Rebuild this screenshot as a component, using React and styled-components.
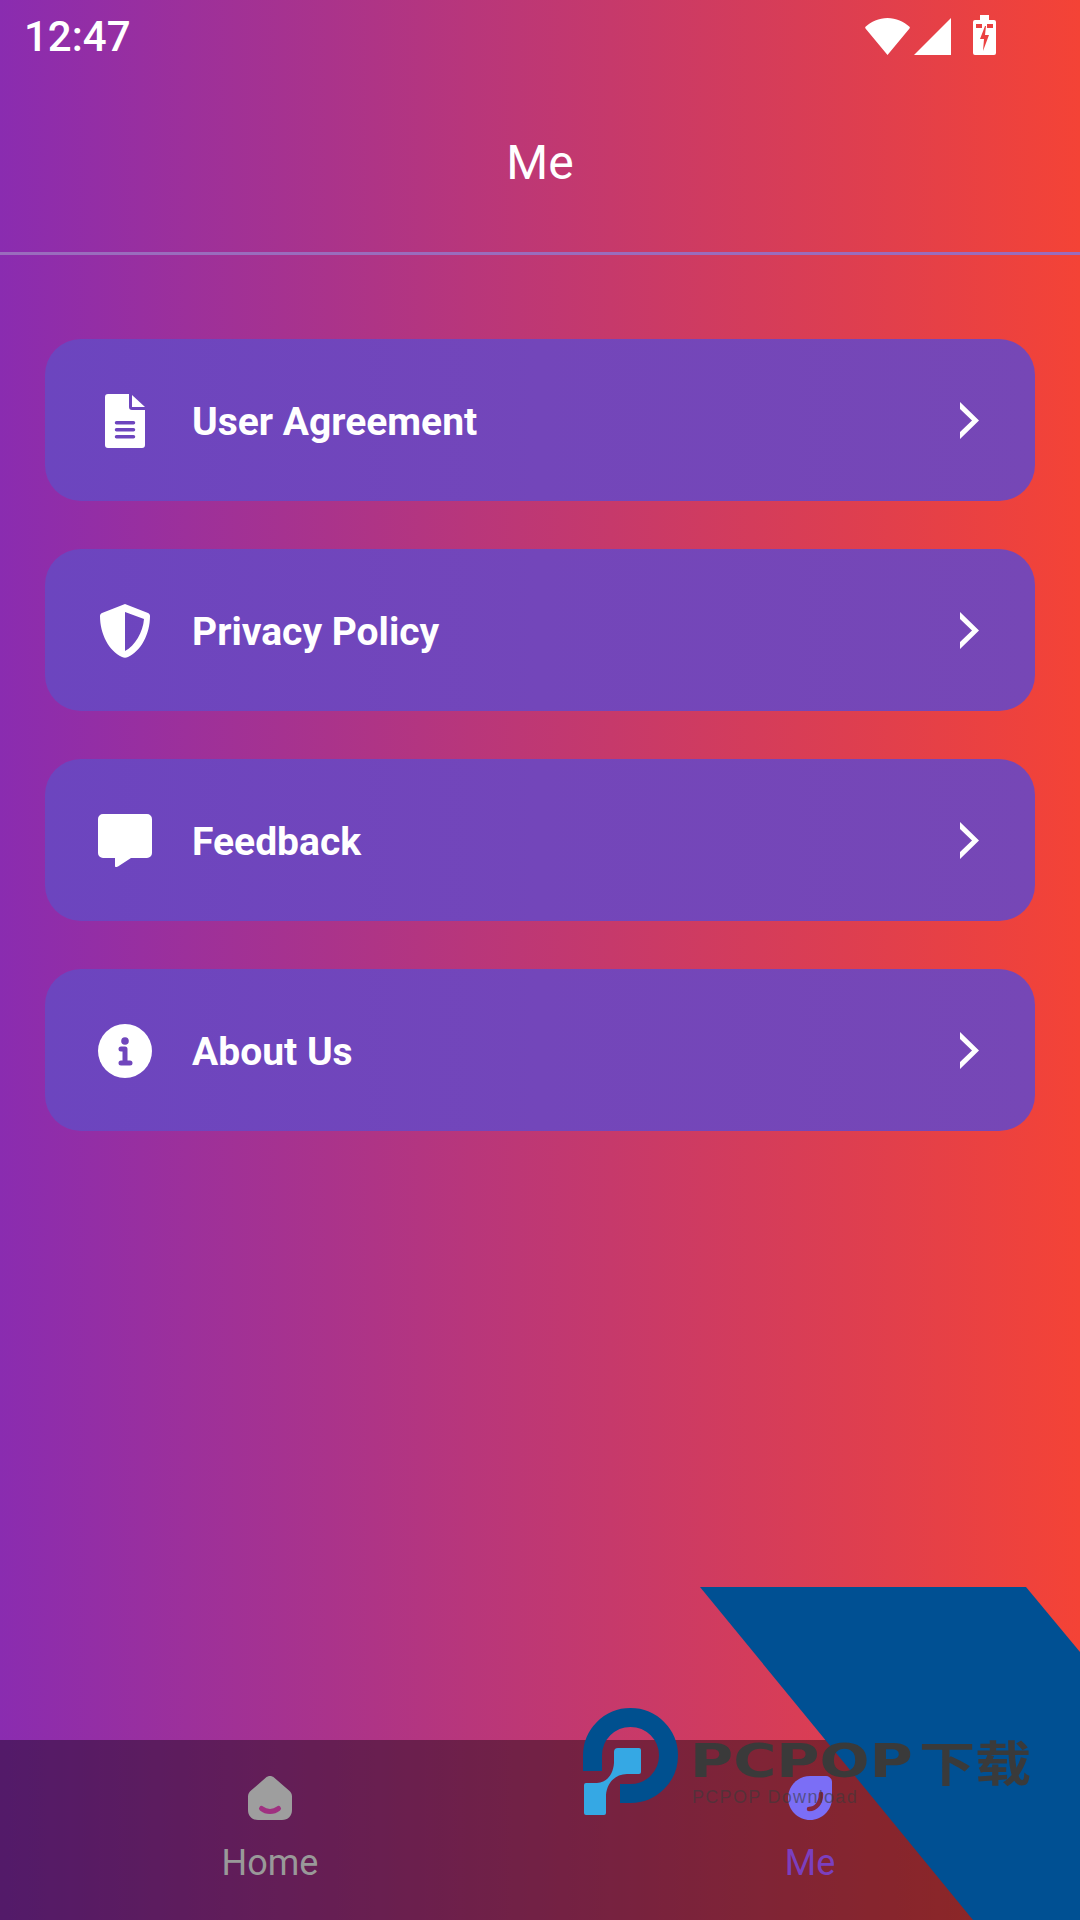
import React from "react";
import styled, { createGlobalStyle } from "styled-components";

const GlobalStyle = createGlobalStyle`
  html, body {
    margin: 0;
    padding: 0;
  }
  body {
    font-family: Roboto, "Liberation Sans", sans-serif;
  }
`;

const Page = styled.div`
  position: relative;
  width: 1080px;
  height: 1920px;
  overflow: hidden;
  display: flex;
  flex-direction: column;
  background: linear-gradient(to right, #8a2cb0, #f44336);
  color: #fff;
`;

const StatusBar = styled.div`
  height: 72px;
  padding: 0 84px 0 24px;
  display: flex;
  align-items: center;
  justify-content: space-between;
  font-size: 42px;
  font-weight: 500;
`;

const StatusIcons = styled.div`
  display: flex;
  align-items: flex-end;
  padding-bottom: 3px;
`;

const Header = styled.header`
  height: 180px;
  display: flex;
  align-items: center;
  justify-content: center;
  font-size: 48px;
  border-bottom: 3px solid #9a6cbd;
`;

const Menu = styled.div`
  padding: 84px 45px 0;
  display: flex;
  flex-direction: column;
  gap: 48px;
`;

const MenuRow = styled.div`
  height: 162px;
  padding: 0 56px 0 53px;
  border-radius: 36px;
  display: flex;
  align-items: center;
  background: linear-gradient(to right, #6c45bf, #7346ba 50%, #7647b6);
`;

const RowIcon = styled.div`
  width: 54px;
  height: 54px;
  margin: 1px 40px 0 0;
  display: flex;
  align-items: center;
  justify-content: center;
`;

const RowLabel = styled.div`
  flex: 1;
  padding-top: 3px;
  font-size: 39px;
  font-weight: 700;
`;

const TabBar = styled.nav`
  margin-top: auto;
  height: 180px;
  display: flex;
  background: rgba(0, 0, 0, 0.4);
`;

const Tab = styled.div`
  flex: 1;
  display: flex;
  flex-direction: column;
  align-items: center;
  padding-top: 36px;
  font-size: 36px;
  color: ${(p) => (p.$active ? "#7b3fbf" : "#999999")};
`;

const TabIcon = styled.div`
  height: 44px;
  margin-bottom: 22px;
`;

const Ribbon = styled.div`
  position: absolute;
  left: 700px;
  top: 1587px;
  width: 380px;
  height: 333px;
  background: #005093;
  clip-path: polygon(0 0, 326px 0, 380px 65px, 380px 333px, 273px 333px);
`;

const Watermark = styled.div`
  position: absolute;
  left: 583px;
  top: 1707px;
  width: 450px;
  height: 110px;
`;

const MarkTitle = styled.div`
  position: absolute;
  left: 107px;
  top: 27px;
  font-family: "DejaVu Sans", sans-serif;
  font-weight: 700;
  font-size: 46px;
  line-height: 54px;
  color: #3a3a3a;
  transform: scaleX(1.28);
  transform-origin: left center;
`;

const MarkCjk = styled.div`
  position: absolute;
  left: 336px;
  top: 26px;
  font-family: "Noto Sans CJK SC", sans-serif;
  font-weight: 700;
  font-size: 56px;
  line-height: 56px;
  color: #3a3a3a;
  transform: scaleY(0.85);
`;

const MarkSub = styled.div`
  position: absolute;
  left: 109px;
  top: 80px;
  font-family: "Liberation Sans", sans-serif;
  font-size: 18px;
  line-height: 20px;
  letter-spacing: 1.3px;
  color: rgba(58, 58, 58, 0.6);
  white-space: nowrap;
`;

const Chevron = () => (
  <svg width="19" height="37" viewBox="0 0 19 37">
    <path fill="#fff" d="M0 0l19 18.500L0 37v-7l12-11.500L0 7z" />
  </svg>
);

const DocIcon = () => (
  <svg width="40" height="54" viewBox="0 0 40 54">
    <path fill="#fff" fillRule="evenodd" d="M3 0h21v13a3 3 0 0 0 3 3h13v35a3 3 0 0 1-3 3H3a3 3 0 0 1-3-3V3a3 3 0 0 1 3-3zM11.500 27a1.750 1.750 0 0 0 0 3.500h17a1.750 1.750 0 0 0 0-3.500zM11.500 34a1.750 1.750 0 0 0 0 3.500h17a1.750 1.750 0 0 0 0-3.500zM11.500 41a1.750 1.750 0 0 0 0 3.500h17a1.750 1.750 0 0 0 0-3.500z" />
    <path fill="#fff" d="M27 1l13 12H27z" />
  </svg>
);

const ShieldIcon = () => (
  <svg width="50" height="54" viewBox="0 0 50 54">
    <path fill="#fff" fillRule="evenodd" d="M25 0l23 9c1.200.500 2 1.500 2 3 0 18-9 35-22 41-2 1-4 1-6 0C9 47 0 30 0 12c0-1.500.800-2.500 2-3zM25 8v39c10-5 18-19 19-32z" />
  </svg>
);

const ChatIcon = () => (
  <svg width="54" height="53" viewBox="0 0 54 53">
    <path fill="#fff" d="M5 0h44a5 5 0 0 1 5 5v34a5 5 0 0 1-5 5H33L20 52.500c-1 .700-3 .700-3 0V44H5a5 5 0 0 1-5-5V5a5 5 0 0 1 5-5z" />
  </svg>
);

const InfoIcon = () => (
  <svg width="54" height="54" viewBox="0 0 54 54">
    <circle cx="27" cy="27" r="27" fill="#fff" />
    <circle cx="27" cy="17" r="3.800" fill="#7046bc" />
    <path fill="none" stroke="#7046bc" strokeWidth="5" strokeLinecap="round" strokeLinejoin="round" d="M23 25h4v14M23 39h9" />
  </svg>
);

const HomeIcon = () => (
  <svg width="44" height="44" viewBox="0 0 44 44">
    <path fill="#9e9e9e" fillRule="evenodd" d="M18 1.500c2.300-2 5.700-2 8 0l15 13c2 1.700 3 3.500 3 6V34c0 6-4 10-10 10H10C4 44 0 40 0 34V20.500c0-2.500 1-4.300 3-6z" />
    <path fill="none" stroke="#9f3080" strokeWidth="5" strokeLinecap="round" d="M13.500 32.500c5 4 12 4 17 0" />
  </svg>
);

const MeIcon = () => (
  <svg width="44" height="44" viewBox="0 0 44 44">
    <path fill="#7b6ef6" d="M22 44C10 44 0 34 0 22S10 0 22 0h16c3.300 0 6 2.700 6 6v16c0 12-10 22-22 22z" />
    <path fill="none" stroke="#85263f" strokeWidth="4.500" strokeLinecap="round" d="M21 33c7 0 12-6 12-15" />
  </svg>
);

const WifiIcon = () => (
  <svg width="45" height="37" viewBox="0 0 45 37">
    <path fill="#fff" d="M22.500 37L.5 10.500c-.5-.600-.5-1.200 0-1.700C6 3.500 14 0 22.500 0S39 3.500 44.500 8.800c.5.500.5 1.100 0 1.700z" />
  </svg>
);

const SignalIcon = () => (
  <svg width="37" height="37" viewBox="0 0 37 37" style={{ margin: "0 22px 0 4px" }}>
    <path fill="#fff" d="M37 0v37H0z" />
  </svg>
);

const BatteryIcon = () => (
  <svg width="23" height="40" viewBox="0 0 23 40">
    <path fill="#fff" fillRule="evenodd" d="M7 0h9v5h5a2 2 0 0 1 2 2v31a2 2 0 0 1-2 2H2a2 2 0 0 1-2-2V7a2 2 0 0 1 2-2h5zM3 9v4h6V9zM14 9v4h6V9zM12 11L7 24h4l-1 12 6-16h-4l1-9z" />
  </svg>
);

const LogoMark = () => (
  <svg width="96" height="110" viewBox="0 0 96 110" style={{ position: "absolute", left: 0, top: 0 }}>
    <path fill="none" stroke="#00508f" strokeWidth="19" d="M9.500 64V48.500a38 38 0 1 1 38 38H37" />
    <path fill="#35a8e4" d="M35 41h21a2 2 0 0 1 2 2v22a2 2 0 0 1-2 2H44C33 67 24 75 23 88v18a2 2 0 0 1-2 2H3a2 2 0 0 1-2-2V78a2 2 0 0 1 2-2h11c10-1 16-8 17-20V45a4 4 0 0 1 4-4z" />
  </svg>
);

const rows = [
  { label: "User Agreement", icon: <DocIcon /> },
  { label: "Privacy Policy", icon: <ShieldIcon /> },
  { label: "Feedback", icon: <ChatIcon /> },
  { label: "About Us", icon: <InfoIcon /> },
];

const App = () => {
  return (
    <Page>
      <GlobalStyle />
      <StatusBar>
        <span>12:47</span>
        <StatusIcons>
          <WifiIcon />
          <SignalIcon />
          <BatteryIcon />
        </StatusIcons>
      </StatusBar>
      <Header>Me</Header>
      <Menu>
        {rows.map((row) => (
          <MenuRow key={row.label}>
            <RowIcon>{row.icon}</RowIcon>
            <RowLabel>{row.label}</RowLabel>
            <Chevron />
          </MenuRow>
        ))}
      </Menu>
      <TabBar>
        <Tab>
          <TabIcon><HomeIcon /></TabIcon>
          Home
        </Tab>
        <Tab $active>
          <TabIcon><MeIcon /></TabIcon>
          Me
        </Tab>
      </TabBar>
      <Ribbon />
      <Watermark>
        <LogoMark />
        <MarkTitle>PCPOP</MarkTitle>
        <MarkCjk>下载</MarkCjk>
        <MarkSub>PCPOP Download</MarkSub>
      </Watermark>
    </Page>
  );
};

export default App;
